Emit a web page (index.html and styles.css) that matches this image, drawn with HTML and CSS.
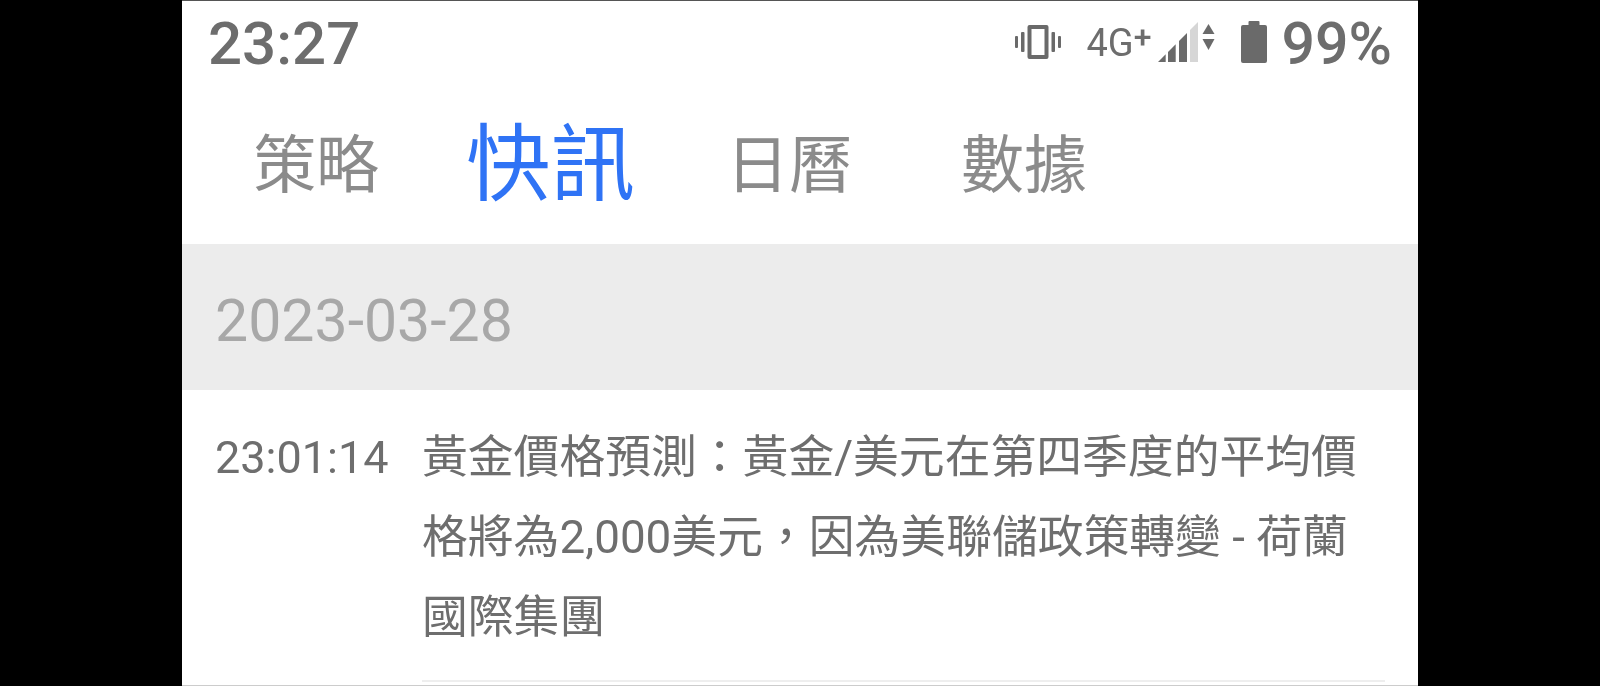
FILE: index.html
```html
<!DOCTYPE html>
<html lang="zh-Hant">
<head>
  <meta charset="UTF-8">
  <meta name="viewport" content="width=device-width, initial-scale=1.0">
  <title>快訊</title>
  <link rel="stylesheet" href="styles.css">
</head>
<body>
  <div class="phone">
    <div class="status-bar">
      <span class="clock">23:27</span>
      <div class="status-icons">
        <svg class="icon-vibrate" width="46" height="34" viewBox="0 0 46 34" fill="#6a6a6a">
          <rect x="0" y="11" width="3" height="12" rx="1"/>
          <rect x="6" y="7" width="3.5" height="20" rx="1"/>
          <path fill-rule="evenodd" d="M12.500 2a2 2 0 0 1 2-2h17a2 2 0 0 1 2 2v30a2 2 0 0 1-2 2h-17a2 2 0 0 1-2-2zM16.500 4v26h13V4z"/>
          <rect x="36.500" y="7" width="3.500" height="20" rx="1"/>
          <rect x="43" y="11" width="3" height="12" rx="1"/>
        </svg>
        <span class="network">4G<span class="network-plus">+</span></span>
        <svg class="icon-signal" width="57" height="40" viewBox="0 0 57 40" fill="#6a6a6a">
          <path d="M0 40L7.700 32.300V40z"/>
          <path d="M10 30L17.700 22.300V40H10z"/>
          <path d="M21 19L29 11V40H21z"/>
          <path fill="#d6d6d6" d="M32 8L40 0V40H32z"/>
          <path d="M44.500 12L50.500 2L56.500 12z"/>
          <path d="M44.500 17H56.500L50.500 28z"/>
        </svg>
        <svg class="icon-battery" width="26" height="42" viewBox="0 0 26 42" fill="#6a6a6a">
          <path d="M8.500 0h9a1 1 0 0 1 1 1v3h5.500a2 2 0 0 1 2 2v34a2 2 0 0 1-2 2H2a2 2 0 0 1-2-2V6a2 2 0 0 1 2-2h5.500V1a1 1 0 0 1 1-1z"/>
        </svg>
        <span class="battery-level">99%</span>
      </div>
    </div>

    <nav class="tabs">
      <span class="tab tab-strategy">策略</span>
      <span class="tab tab-active">快訊</span>
      <span class="tab tab-calendar">日曆</span>
      <span class="tab">數據</span>
    </nav>

    <div class="date-band">2023-03-28</div>

    <div class="news-row">
      <span class="news-time">23:01:14</span>
      <p class="news-text">黃金價格預測：黃金/美元在第四季度的平均價格將為2,000美元，因為美聯儲政策轉變 - 荷蘭國際集團</p>
    </div>
  </div>
</body>
</html>
```

FILE: styles.css
```css
html, body {
  height: 100%;
}

body {
  margin: 0;
  background-color: #000;
  font-family: Roboto, "Noto Sans CJK TC", sans-serif;
  overflow: hidden;
}

.phone {
  box-sizing: border-box;
  width: 1236px;
  height: 686px;
  margin-left: 182px;
  background-color: #fff;
  border-top: 1px solid #555;
  border-bottom: 1px solid #ccc;
  display: flex;
  flex-direction: column;
  filter: blur(0.5px);
}

/* Status bar */
.status-bar {
  height: 86px;
  padding: 0 26px;
  display: flex;
  align-items: center;
  justify-content: space-between;
  color: #6d6d6d;
}

.clock {
  font-size: 60px;
  font-weight: 500;
  line-height: 86px;
}

.status-icons {
  display: flex;
  align-items: center;
}

.status-icons svg {
  margin-bottom: 5px;
}

.network {
  margin-left: 25px;
  font-size: 38px;
  line-height: 42px;
}

.network-plus {
  position: relative;
  top: -8px;
  font-size: 32px;
  font-weight: 500;
}

.icon-signal {
  margin-left: 7px;
}

.icon-battery {
  margin-left: 26px;
}

.battery-level {
  margin-left: 14px;
  font-size: 59px;
  font-weight: 500;
  line-height: 66px;
}

/* Tabs */
.tabs {
  box-sizing: border-box;
  height: 157px;
  padding: 0 0 12px 71px;
  display: flex;
  align-items: center;
  font-family: "Noto Sans CJK TC", sans-serif;
  color: #8b8b8b;
}

.tab {
  font-size: 63px;
  margin-right: 109px;
}

.tab-strategy {
  margin-right: 87px;
}

.tab-active {
  font-size: 84.5px;
  color: #2f73f5;
  margin-right: 91px;
  margin-bottom: 6px;
}

/* Date band */
.date-band {
  box-sizing: border-box;
  height: 146px;
  padding: 8px 0 0 33px;
  background-color: #ececec;
  color: #a8a8a8;
  font-size: 59px;
  line-height: 138px;
}

/* News */
.news-row {
  margin: 0 33px;
  padding-top: 28px;
  display: flex;
  flex: 1;
}

.news-time {
  width: 207px;
  flex-shrink: 0;
  color: #6e6e6e;
  font-size: 45px;
  line-height: 80px;
}

.news-text {
  flex: 1;
  margin: 0;
  color: #6e6e6e;
  font-size: 45.8px;
  line-height: 80px;
  border-bottom: 2px solid #eee;
  height: 262px;
}
```
